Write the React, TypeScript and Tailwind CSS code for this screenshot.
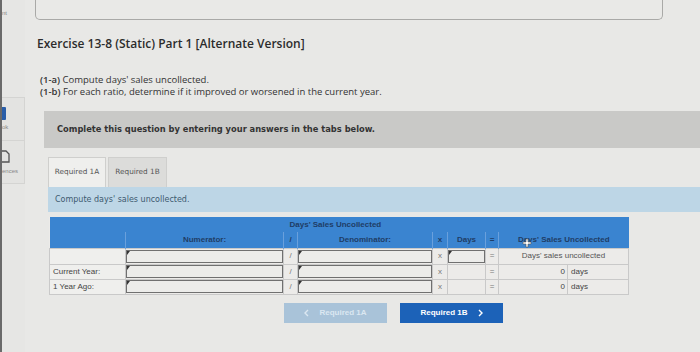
import { ReactNode } from "react";

// Connect-style exercise page: left rail (cut off), question header, tabs,
// ratio table and prev/next buttons.

const sans = { fontFamily: '"Liberation Sans", Arial, sans-serif' };
const verdana = { fontFamily: '"DejaVu Sans", Verdana, sans-serif' };
const open = { fontFamily: '"Open Sans", "Liberation Sans", sans-serif' };

function Flag() {
  return <span className="absolute left-0 top-0 h-0 w-0 border-t-[4px] border-r-[3px] border-t-[#333] border-r-transparent" />;
}

function Input({ className = "" }: { className?: string }) {
  return (
    <td className={"relative border border-[#c9c9c9] p-0 " + className}>
      <div className="relative h-[13px] border border-[#707070] bg-[#ececea]">
        <Flag />
      </div>
    </td>
  );
}

function Sym({ children }: { children: ReactNode }) {
  return <td className="border border-[#c9c9c9] text-center text-[8px] text-[#777]">{children}</td>;
}

function Chevron({ left = false }: { left?: boolean }) {
  return (
    <svg width="5" height="8" viewBox="0 0 5 8">
      <path d={left ? "M4 1L1 4l3 3" : "M1 1l3 3-3 3"} fill="none" stroke="currentColor" strokeWidth="1.4" />
    </svg>
  );
}

function DataRow({ label }: { label: string }) {
  return (
    <tr className="h-[15px]">
      <td className="border border-[#c9c9c9] bg-[#efefed] pl-[3px] text-[8px] text-[#444]">{label}</td>
      <Input />
      <Sym>/</Sym>
      <Input />
      <Sym>x</Sym>
      <td className="border border-[#c9c9c9]" />
      <Sym>=</Sym>
      <td className="border-y border-l border-[#c9c9c9] pr-[2px] text-right text-[8px] text-[#444]">0</td>
      <td className="border border-[#c9c9c9] pl-[3px] text-[8px] text-[#444]">days</td>
    </tr>
  );
}

export default function App() {
  return (
    <div className="flex h-[352px] w-[700px] overflow-hidden bg-[#e8e8e6]" style={open}>
      {/* left rail, mostly scrolled off: only the tail of each label shows */}
      <div className="relative w-[25px] shrink-0 overflow-hidden border-l-[2px] border-[#6a6a6a] bg-[#e6e6e4]" style={sans}>
        <div className="pt-[9px] text-[6px] leading-[8px] text-[#888]">nt</div>
        <div className="mt-[80px] border-y border-r border-[#d4d4d2] bg-[#e3e3e1]">
          <div className="flex h-[43px] flex-col justify-center border-b border-[#d4d4d2]">
            <div className="h-[13px] w-[4px] rounded-r-[1px] bg-[#2a5ea8]" />
            <span className="mt-[3px] text-[6px] leading-[8px] text-[#888]">ok</span>
          </div>
          <div className="flex h-[42px] flex-col justify-center">
            <svg width="8" height="13" viewBox="0 0 8 13">
              <path d="M-2 1h6l3 3v8H-2" fill="none" stroke="#555" strokeWidth="1.3" />
            </svg>
            <span className="mt-[4px] text-[6px] leading-[8px] text-[#888]">ences</span>
          </div>
        </div>
      </div>

      <div className="relative flex-1 pl-[10px]">
        <div className="h-[20px] w-[628px] rounded-b-[5px] border-x border-b border-[#a9a9a7] bg-[#e9e9e7]" />

        <h1 className="ml-[2px] mt-[16px] text-[12px] font-semibold leading-[16px] text-[#2c2c2c]">
          Exercise 13-8 (Static) Part 1 [Alternate Version]
        </h1>

        <div className="ml-[5px] mt-[22px] text-[9.5px] leading-[12px] text-[#333]">
          <p>
            <b className="font-semibold">(1-a)</b> Compute days' sales uncollected.
          </p>
          <p>
            <b className="font-semibold">(1-b)</b> For each ratio, determine if it improved or worsened in the current year.
          </p>
        </div>

        <div className="ml-[9px] mt-[13px] flex h-[37px] items-center bg-[#c9c9c7] pl-[13px]" style={verdana}>
          <span className="text-[8.3px] font-bold text-[#333]">Complete this question by entering your answers in the tabs below.</span>
        </div>

        <div className="ml-[13px] mt-[9px] flex h-[30px] items-stretch gap-[2px]" style={verdana}>
          <div className="flex w-[58px] items-center justify-center border-x border-t border-[#cfcfcd] bg-[#efefed] text-[7.3px] text-[#555]">
            Required 1A
          </div>
          <div className="flex w-[59px] items-center justify-center border-x border-t border-[#cfcfcd] bg-[#dcdcda] text-[7.3px] text-[#555]">
            Required 1B
          </div>
        </div>

        <div className="ml-[13px] flex h-[25px] items-center bg-[#bdd6e6] pl-[7px] text-[8px] text-[#3d5a70]" style={verdana}>
          Compute days' sales uncollected.
        </div>

        <table className="ml-[14px] mt-[5px] table-fixed border-collapse bg-[#ecebe9]" style={sans}>
          <colgroup>
            <col className="w-[76px]" />
            <col className="w-[158px]" />
            <col className="w-[14px]" />
            <col className="w-[135px]" />
            <col className="w-[15px]" />
            <col className="w-[38px]" />
            <col className="w-[13px]" />
            <col className="w-[69px]" />
            <col className="w-[61px]" />
          </colgroup>
          <thead className="bg-[#3a84d0] text-[8px] font-bold text-[#1f3d66]">
            <tr className="h-[15px]">
              <th colSpan={2} />
              <th colSpan={7} className="pl-[6px] text-left">
                Days' Sales Uncollected
              </th>
            </tr>
            <tr className="h-[16px]">
              <th className="border-r border-[#6aa0dc]" />
              <th className="border-r border-[#6aa0dc]">Numerator:</th>
              <th className="border-r border-[#6aa0dc]">/</th>
              <th className="border-r border-[#6aa0dc]">Denominator:</th>
              <th className="border-r border-[#6aa0dc]">x</th>
              <th className="border-r border-[#6aa0dc]">Days</th>
              <th className="border-r border-[#6aa0dc]">=</th>
              <th colSpan={2}>Days' Sales Uncollected</th>
            </tr>
          </thead>
          <tbody>
            <tr className="h-[16px]">
              <td className="border border-[#c9c9c9] bg-[#efefed]" />
              <Input />
              <Sym>/</Sym>
              <Input />
              <Sym>x</Sym>
              <Input />
              <Sym>=</Sym>
              <td colSpan={2} className="border border-[#c9c9c9] text-center text-[8px] text-[#555]">
                Days' sales uncollected
              </td>
            </tr>
            <DataRow label="Current Year:" />
            <DataRow label="1 Year Ago:" />
          </tbody>
        </table>

        <div className="ml-[249px] mt-[8px] flex gap-[13px]" style={sans}>
          <button className="flex h-[20px] w-[103px] items-center justify-center gap-[10px] bg-[#a9c3d9] text-[8px] font-bold text-[#dbe7f1]">
            <Chevron left />
            <span>Required 1A</span>
          </button>
          <button className="flex h-[20px] w-[103px] items-center justify-center gap-[10px] bg-[#1c62b8] text-[8px] font-bold text-white">
            <span>Required 1B</span>
            <Chevron />
          </button>
        </div>

        {/* mouse cursor over the header */}
        <svg width="10" height="10" viewBox="0 0 10 10" className="absolute left-[497px] top-[238px]">
          <path d="M4 1h2v3h3v2H6v3H4V6H1V4h3z" fill="#fff" stroke="#555" strokeWidth="0.6" />
        </svg>
      </div>
    </div>
  );
}
